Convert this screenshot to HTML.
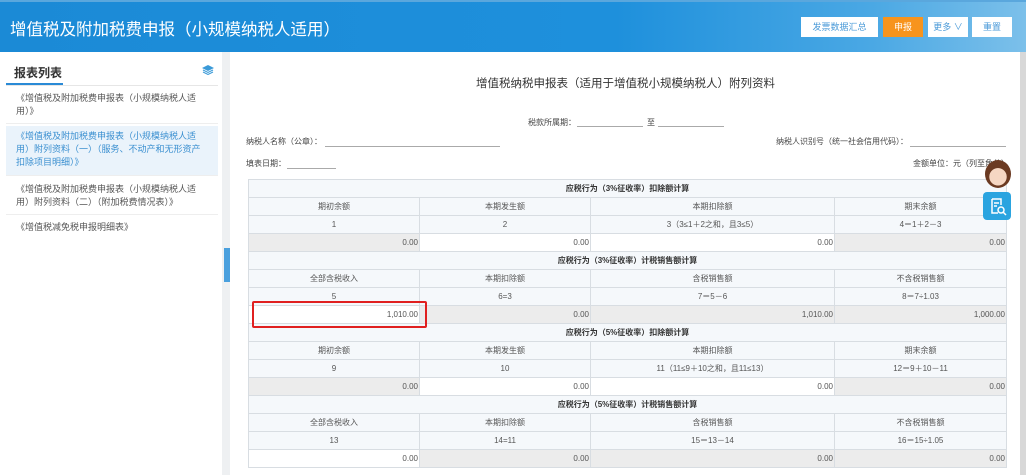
<!DOCTYPE html><html><head><meta charset="utf-8"><style>
*{margin:0;padding:0;box-sizing:border-box}
body{width:1026px;height:475px;overflow:hidden;background:#fff;font-family:"Liberation Sans","Noto Sans CJK SC",sans-serif;position:relative;color:#555}
.hd{position:absolute;left:0;top:0;width:1026px;height:52px;background:linear-gradient(90deg,#1b8ad6 0%,#1e90dc 60%,#4aa8e4 85%,#7cc0ea 100%);border-top:2px solid #5aa7dd}
.hd h1{position:absolute;left:10px;top:14px;font-size:16.5px;font-weight:normal;color:#fff}
.btn{position:absolute;top:15px;height:20px;background:#fff;color:#4a9ad8;font-size:9px;line-height:20px;text-align:center}
.side{position:absolute;left:0;top:52px;width:222px;height:423px;background:#fff}
.gut{position:absolute;left:222px;top:52px;width:8px;height:423px;background:#eef0f2}
.hand{position:absolute;left:224px;top:248px;width:6px;height:34px;background:#4aa0de}
.side .t{position:absolute;left:14px;top:12px;font-size:12px;color:#333;font-weight:bold}
.side .ul{position:absolute;left:6px;top:31px;width:57px;height:2px;background:#2a8ad6}
.side .ln{position:absolute;left:6px;top:33px;width:212px;height:1px;background:#e6e6e6}
.it{position:absolute;left:6px;width:212px;font-size:9px;line-height:13px;padding:0 10px;color:#555;border-bottom:1px solid #eee}
.sb{position:absolute;left:1020px;top:52px;width:6px;height:423px;background:#d8d8d8}
.sm{font-size:8px;color:#444;position:absolute;white-space:nowrap}
.u{position:absolute;height:1px;background:#aaa}
table{position:absolute;left:248px;top:179px;border-collapse:collapse;table-layout:fixed;width:758px;font-size:8px;color:#555}
td{border:1px solid #d8dde2;height:18px;text-align:center;background:#f5f8fb;padding:0 1px;white-space:nowrap}
td.s{font-weight:bold;color:#333}
td.g{background:#ececec;text-align:right}
td.w{background:#fff;text-align:right}
</style></head><body>
<div class="hd"><h1>增值税及附加税费申报（小规模纳税人适用）</h1>
<div class="btn" style="left:801px;width:77px">发票数据汇总</div>
<div class="btn" style="left:883px;width:40px;background:#f7941d;color:#fff">申报</div>
<div class="btn" style="left:928px;width:40px">更多 ∨</div>
<div class="btn" style="left:972px;width:40px">重置</div>
</div>
<div class="side"><div class="t">报表列表</div>
<svg style="position:absolute;left:202px;top:13px" width="12" height="10" viewBox="0 0 12 10"><path d="M6 0L12 3L6 6L0 3Z" fill="#3a9ad8"/><path d="M1 5L6 7.5L11 5M1 7L6 9.5L11 7" stroke="#3a9ad8" fill="none"/></svg>
<div class="ul"></div><div class="ln"></div>
<div class="it" style="top:40px;height:32px">《增值税及附加税费申报表（小规模纳税人适用）》</div>
<div class="it" style="top:74px;height:50px;background:#eaf3fb;color:#3a8fd0;padding-top:4px">《增值税及附加税费申报表（小规模纳税人适用）附列资料（一）（服务、不动产和无形资产扣除项目明细）》</div>
<div class="it" style="top:128px;height:35px;padding-top:3px">《增值税及附加税费申报表（小规模纳税人适用）附列资料（二）（附加税费情况表）》</div>
<div class="it" style="top:169px;height:20px;border:none">《增值税减免税申报明细表》</div>
</div>
<div class="gut"></div><div class="hand"></div><div class="sb"></div>
<div class="sm" style="left:476px;top:75px;font-size:11.5px;color:#333">增值税纳税申报表（适用于增值税小规模纳税人）附列资料</div>
<div class="sm" style="left:528px;top:117px">税款所属期：</div><div class="u" style="left:577px;top:126px;width:66px"></div>
<div class="sm" style="left:647px;top:117px">至</div><div class="u" style="left:658px;top:126px;width:66px"></div>
<div class="sm" style="left:246px;top:136px">纳税人名称（公章）：</div><div class="u" style="left:325px;top:146px;width:175px"></div>
<div class="sm" style="left:776px;top:136px">纳税人识别号（统一社会信用代码）：</div><div class="u" style="left:910px;top:146px;width:96px"></div>
<div class="sm" style="left:246px;top:158px">填表日期：</div><div class="u" style="left:287px;top:168px;width:49px"></div>
<div class="sm" style="left:913px;top:158px">金额单位：元（列至角分）</div>
<table>
<colgroup><col style="width:171px"><col style="width:171px"><col style="width:244px"><col style="width:172px"></colgroup>
<tr><td colspan="4" class="s">应税行为（3%征收率）扣除额计算</td></tr>
<tr><td>期初余额</td><td>本期发生额</td><td>本期扣除额</td><td>期末余额</td></tr>
<tr><td>1</td><td>2</td><td>3（3≤1＋2之和，且3≤5）</td><td>4＝1＋2－3</td></tr>
<tr><td class="g">0.00</td><td class="w">0.00</td><td class="w">0.00</td><td class="g">0.00</td></tr>
<tr><td colspan="4" class="s">应税行为（3%征收率）计税销售额计算</td></tr>
<tr><td>全部含税收入</td><td>本期扣除额</td><td>含税销售额</td><td>不含税销售额</td></tr>
<tr><td>5</td><td>6=3</td><td>7＝5－6</td><td>8＝7÷1.03</td></tr>
<tr><td class="w">1,010.00</td><td class="g">0.00</td><td class="g">1,010.00</td><td class="g">1,000.00</td></tr>
<tr><td colspan="4" class="s">应税行为（5%征收率）扣除额计算</td></tr>
<tr><td>期初余额</td><td>本期发生额</td><td>本期扣除额</td><td>期末余额</td></tr>
<tr><td>9</td><td>10</td><td>11（11≤9＋10之和，且11≤13）</td><td>12＝9＋10－11</td></tr>
<tr><td class="g">0.00</td><td class="w">0.00</td><td class="w">0.00</td><td class="g">0.00</td></tr>
<tr><td colspan="4" class="s">应税行为（5%征收率）计税销售额计算</td></tr>
<tr><td>全部含税收入</td><td>本期扣除额</td><td>含税销售额</td><td>不含税销售额</td></tr>
<tr><td>13</td><td>14=11</td><td>15＝13－14</td><td>16＝15÷1.05</td></tr>
<tr><td class="w">0.00</td><td class="g">0.00</td><td class="g">0.00</td><td class="g">0.00</td></tr>
</table>
<div style="position:absolute;left:252px;top:301px;width:175px;height:27px;border:2px solid #e02020;border-radius:2px"></div>
<div style="position:absolute;left:985px;top:160px;width:26px;height:28px;border-radius:50%;background:radial-gradient(circle at 50% 60%,#f6d7c3 40%,#6b3a22 42%)"></div>
<div style="position:absolute;left:983px;top:192px;width:28px;height:28px;border-radius:4px;background:#2aa4e0"><svg width="28" height="28" viewBox="0 0 28 28"><path d="M9 7h9v6M9 7v14h6M11 11h5M11 14h3" stroke="#fff" stroke-width="1.5" fill="none"/><circle cx="18" cy="18" r="3" stroke="#fff" stroke-width="1.5" fill="none"/><path d="M20 20l3 3" stroke="#fff" stroke-width="1.5"/></svg></div>
</body></html>
